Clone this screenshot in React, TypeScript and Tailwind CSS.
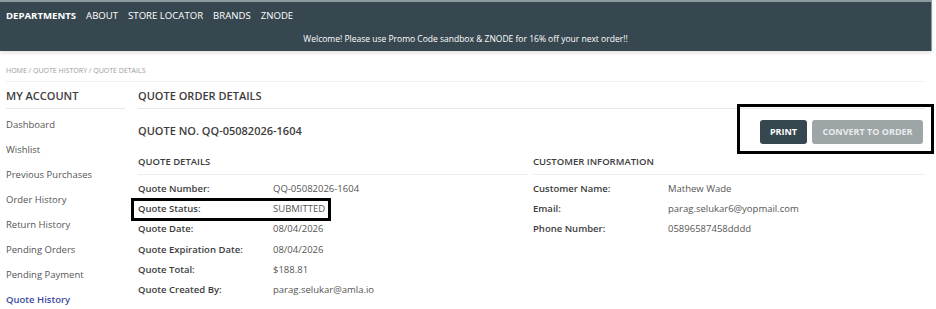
import React from 'react';

const sidebarLinks = [
  'Dashboard',
  'Wishlist',
  'Previous Purchases',
  'Order History',
  'Return History',
  'Pending Orders',
  'Pending Payment',
  'Quote History',
];

const quoteRows = [
  ['Quote Number:', 'QQ-05082026-1604'],
  ['Quote Status:', 'SUBMITTED'],
  ['Quote Date:', '08/04/2026'],
  ['Quote Expiration Date:', '08/04/2026'],
  ['Quote Total:', '$188.81'],
  ['Quote Created By:', 'parag.selukar@amla.io'],
];

const customerRows = [
  ['Customer Name:', 'Mathew Wade'],
  ['Email:', 'parag.selukar6@yopmail.com'],
  ['Phone Number:', '05896587458dddd'],
];

const Row: React.FC<{ label: string; value: string; boxed?: boolean }> = ({ label, value, boxed }) => (
  <div className="relative flex h-[20.2px] items-center">
    <span className="w-[135px] font-semibold text-[#3d3d3d]">{label}</span>
    <span className="text-[#555]">{value}</span>
    {boxed && (
      <div className="absolute -left-[7px] top-[-1px] h-[23px] w-[200px] border-[3px] border-black" />
    )}
  </div>
);

export default function App() {
  return (
    <div className="w-[936px] h-[309px] overflow-hidden bg-white font-['Open_Sans',sans-serif] text-[#333]">
      {/* Header */}
      <div className="w-[932px] h-[51px] bg-[#37474f] border-t-2 border-r border-[#8d9a9e] shadow-[0_2px_4px_rgba(0,0,0,0.12)]">
        <nav className="flex gap-[10px] pl-[6px] pt-[7px] text-[9.6px] text-white">
          <span className="font-bold">DEPARTMENTS</span>
          <span>ABOUT</span>
          <span>STORE LOCATOR</span>
          <span>BRANDS</span>
          <span>ZNODE</span>
        </nav>
        <p className="mt-[10px] text-center text-[8.5px] text-white">
          Welcome! Please use Promo Code sandbox &amp; ZNODE for 16% off your next order!!
        </p>
      </div>

      <div className="w-[925px] pl-[6px]">
        {/* Breadcrumb */}
        <div className="h-[31px] border-b border-[#f0f0f0] pt-[15px] text-[7px] text-[#9a9a9a]">
          HOME / QUOTE HISTORY / QUOTE DETAILS
        </div>

        <div className="flex gap-[13px]">
          {/* Sidebar */}
          <aside className="w-[119px] shrink-0">
            <h2 className="h-[27px] border-b border-[#e5e7eb] pt-[6px] text-[11px] font-semibold text-[#3d3d3d]">
              MY ACCOUNT
            </h2>
            <ul className="pt-[4px] text-[9.5px] text-[#555]">
              {sidebarLinks.map((link) => (
                <li
                  key={link}
                  className={`flex h-[24.9px] items-center ${link === 'Quote History' ? 'font-semibold text-[#3b4aa0]' : ''}`}
                >
                  {link}
                </li>
              ))}
            </ul>
          </aside>

          {/* Content */}
          <main className="flex-1">
            <h1 className="h-[27px] border-b border-[#e5e7eb] pt-[6px] text-[11px] font-semibold text-[#3d3d3d]">
              QUOTE ORDER DETAILS
            </h1>

            <div className="flex h-[45px] items-center justify-between">
              <h2 className="text-[11px] font-semibold text-[#3d3d3d]">QUOTE NO. QQ-05082026-1604</h2>
              <div className="relative flex gap-[5px] pr-[2px]">
                <button className="h-[24px] w-[47px] rounded-[3px] bg-[#37474f] text-[9px] font-bold text-white">
                  PRINT
                </button>
                <button className="h-[24px] w-[111px] rounded-[3px] bg-[#9ea5a7] text-[9px] font-bold text-[#e9ecec]">
                  CONVERT TO ORDER
                </button>
                <div className="absolute -left-[23px] -top-[16px] h-[50px] w-[197px] border-[3px] border-black" />
              </div>
            </div>

            <div className="flex gap-[5px] pt-[1px] text-[9.5px]">
              <section className="w-[390px]">
                <h3 className="h-[20px] border-b border-[#eeeeee] text-[9.5px] font-semibold text-[#3d3d3d]">
                  QUOTE DETAILS
                </h3>
                <div className="pt-[4px]">
                  {quoteRows.map(([label, value]) => (
                    <Row key={label} label={label} value={value} boxed={label === 'Quote Status:'} />
                  ))}
                </div>
              </section>
              <section className="flex-1">
                <h3 className="h-[20px] border-b border-[#eeeeee] text-[9.5px] font-semibold text-[#3d3d3d]">
                  CUSTOMER INFORMATION
                </h3>
                <div className="pt-[4px]">
                  {customerRows.map(([label, value]) => (
                    <Row key={label} label={label} value={value} />
                  ))}
                </div>
              </section>
            </div>
          </main>
        </div>
      </div>
    </div>
  );
}
